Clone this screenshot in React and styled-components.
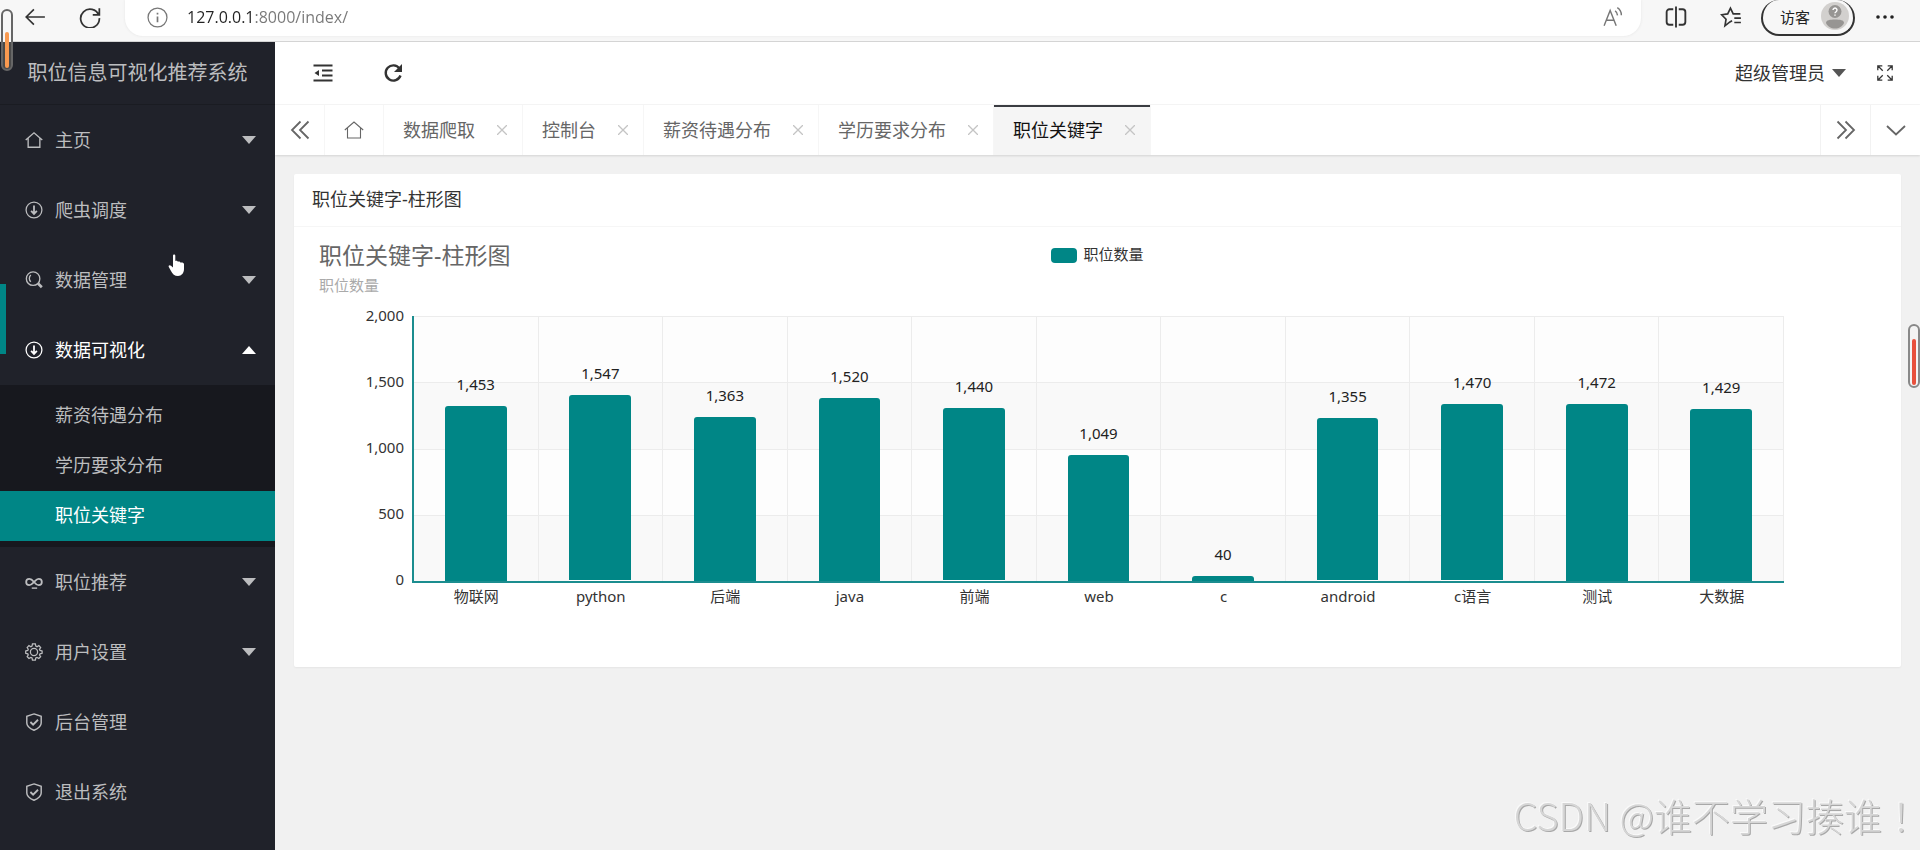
import React from 'react';
import styled, { createGlobalStyle } from 'styled-components';

const TEAL = '#008686';
const BAR_MAX = 2200;

const GlobalStyle = createGlobalStyle`
  * {
    box-sizing: border-box;
  }

  body {
    margin: 0;
    background: #f1f1f1;
    color: #333;
    font-family: 'Noto Sans', 'Noto Sans CJK SC', sans-serif;
    font-size: 18px;
  }

  button,
  input {
    padding: 0;
    border: 0;
    background: none;
    color: inherit;
    font: inherit;
  }

  a {
    color: inherit;
    text-decoration: none;
  }

  svg {
    display: block;
    flex: none;
  }
`;

const Page = styled.div`
  display: flex;
  flex-direction: column;
  min-height: 100vh;
`;

/* browser bar */

const BrowserBar = styled.header`
  display: flex;
  align-items: flex-start;
  height: 42px;
  padding: 0 24px;
  background: #f7f7f7;
  border-bottom: 1px solid #d4d4d4;
`;

const BrowserButton = styled.button`
  display: flex;
  align-items: center;
  justify-content: center;
  width: 22px;
  height: 34px;
  margin-right: ${(props) => props.$gap || 0}px;
  color: #333;
`;

const AddressBar = styled.label`
  display: flex;
  flex: 1;
  align-items: center;
  gap: 19px;
  height: 36px;
  margin-right: 24px;
  padding: 0 16px 2px 22px;
  background: #fff;
  border-radius: 0 0 18px 18px;
  box-shadow: 0 0 3px #e4e4e4;
  color: #777;
`;

const AddressInput = styled.input`
  flex: 1;
  height: 26px;
  background: linear-gradient(to right, #222 67px, #777 67px);
  background-clip: text;
  color: transparent;
  font-family: 'Open Sans', sans-serif;
  font-size: 16px;
`;

const GuestButton = styled.button`
  display: flex;
  align-items: center;
  gap: 11px;
  height: 36px;
  margin-right: 19px;
  padding: 0 4px 2px 17px;
  border: 2px solid #333;
  border-top: 0;
  border-radius: 18px;
  color: #222;
  font-size: 15px;
`;

/* sidebar */

const Body = styled.div`
  display: flex;
  flex: 1;
`;

const Sidebar = styled.nav`
  position: relative;
  flex: none;
  width: 275px;
  background: #20222a;
  color: #bcbdbf;
`;

const Logo = styled.h1`
  margin: 0;
  height: 63px;
  line-height: 62px;
  border-bottom: 1px solid #1a1c22;
  font-size: 20px;
  font-weight: 400;
  text-align: center;
`;

const MenuItem = styled.button`
  display: flex;
  align-items: center;
  gap: 12px;
  width: 100%;
  height: 70px;
  padding: 0 19px 0 25px;
  color: ${(props) => (props.$open ? '#fff' : '#bcbdbf')};
  text-align: left;
`;

const MenuText = styled.span`
  flex: 1;
  padding-bottom: 2px;
`;

const SubMenu = styled.div`
  padding: 6px 0;
  background: #17181e;
`;

const SubItem = styled.a`
  display: block;
  height: 50px;
  padding-left: 55px;
  background: ${(props) => (props.$active ? TEAL : 'none')};
  color: ${(props) => (props.$active ? '#fff' : '#bcbdbf')};
  line-height: 48px;
`;

const NavMarker = styled.span`
  position: absolute;
  top: 242px;
  left: 0;
  width: 6px;
  height: 70px;
  background: ${TEAL};
`;

/* top bar and tabs */

const Main = styled.main`
  flex: 1;
  min-width: 0;
`;

const TopBar = styled.div`
  display: flex;
  align-items: center;
  gap: 50px;
  height: 63px;
  padding: 0 26px 0 38px;
  background: #fff;
  border-bottom: 1px solid #f6f6f6;
`;

const IconButton = styled.button`
  display: flex;
  color: #333;
`;

const UserGroup = styled.div`
  display: flex;
  align-items: center;
  gap: 30px;
  margin-left: auto;
  color: #555;
`;

const UserButton = styled.button`
  display: flex;
  align-items: center;
  gap: 7px;
`;

const UserName = styled.span`
  padding-bottom: 2px;
  color: #333;
`;

const TabBar = styled.div`
  display: flex;
  height: 50px;
  background: #fff;
  box-shadow: 0 1px 2px rgba(0, 0, 0, 0.12);
`;

const TabControl = styled.button`
  display: flex;
  align-items: center;
  justify-content: center;
  width: ${(props) => props.$width || 50}px;
  border-right: ${(props) => (props.$side === 'right' ? 0 : '1px solid #f6f6f6')};
  border-left: ${(props) => (props.$side === 'right' ? '1px solid #f2f2f2' : 0)};
  color: #666;
`;

const Tab = styled.div`
  display: flex;
  align-items: center;
  gap: 22px;
  padding: 0 15px 0 19px;
  border-right: 1px solid #f6f6f6;
  background: ${(props) => (props.$active ? '#f5f5f5' : '#fff')};
  box-shadow: ${(props) => (props.$active ? 'inset 0 2px #3a3c42' : 'none')};
  color: ${(props) => (props.$active ? '#111' : '#666')};
`;

const TabLink = styled.a`
  padding-bottom: 2px;
`;

const CloseButton = styled.button`
  color: #c4c4c4;
`;

const Spacer = styled.div`
  flex: 1;
`;

/* chart card */

const Card = styled.section`
  margin: 19px;
  background: #fff;
  border-radius: 2px;
  box-shadow: 0 1px 2px rgba(0, 0, 0, 0.05);
`;

const CardHeader = styled.h2`
  margin: 0;
  height: 53px;
  padding-left: 18px;
  border-bottom: 1px solid #f6f6f6;
  font-size: 18px;
  font-weight: 400;
  line-height: 50px;
`;

const CardBody = styled.div`
  padding: 14px 0 61px;
`;

const ChartHead = styled.div`
  display: grid;
  grid-template-columns: 1fr auto 1fr;
  padding: 0 25px;
`;

const ChartTitle = styled.h3`
  margin: 0;
  color: #666;
  font-size: 23px;
  font-weight: 400;
  line-height: 28px;
`;

const ChartSubtitle = styled.p`
  margin: 6px 0 21px;
  color: #aaa;
  font-size: 15px;
  line-height: 20px;
`;

const Legend = styled.div`
  display: flex;
  align-items: center;
  gap: 6px;
  height: 28px;
  font-size: 15px;
`;

const LegendText = styled.span`
  padding-bottom: 3px;
`;

const Swatch = styled.span`
  width: 26px;
  height: 15px;
  border-radius: 4px;
  background: ${TEAL};
`;

const ChartArea = styled.div`
  display: grid;
  grid-template-columns: 118px 1fr 117px;
  font-size: 15px;
  line-height: 20px;
`;

const YAxis = styled.div`
  display: flex;
  flex-direction: column;
  justify-content: space-between;
  margin: -11px 0 -6px;
  padding-right: 8px;
  text-align: right;
`;

const Plot = styled.div`
  display: flex;
  height: 267px;
  border-bottom: 2px solid #1b8d8f;
  border-left: 2px solid #1b8d8f;
  background: repeating-linear-gradient(
    #ececec 0 1px,
    #fdfdfd 1px 66px,
    #ececec 66px 67px,
    #f9f9f9 67px 133px
  );
`;

const Column = styled.div`
  display: flex;
  flex: 1;
  flex-direction: column;
  align-items: center;
  justify-content: flex-end;
  border-right: 1px solid #ececec;
`;

const BarValue = styled.span`
  margin-bottom: 12px;
  color: #222;
`;

const Bar = styled.div`
  flex: none;
  width: 50%;
  background: ${TEAL};
  border-bottom: ${(props) => (props.$lifted ? '1px solid #fff' : 0)};
  border-radius: 3px 3px 0 0;
`;

const XAxis = styled.div`
  display: flex;
  grid-column: 2;
  padding: 3px 0 0 2px;
`;

const XLabel = styled.span`
  flex: 1;
  text-align: center;
`;

/* things floating over the page */

const Gauge = styled.span`
  position: fixed;
  top: ${(props) => props.$top}px;
  left: ${(props) => props.$left || 'auto'};
  right: ${(props) => props.$right || 'auto'};
  display: flex;
  align-items: flex-end;
  justify-content: center;
  width: 12px;
  height: ${(props) => props.$height}px;
  padding-bottom: 1px;
  border: 2px solid ${(props) => props.$edge};
  border-radius: 6px;
  background: ${(props) => props.$back};
`;

const GaugeFill = styled.span`
  width: 4px;
  height: ${(props) => props.$height}px;
  border-radius: 2px;
  background: ${(props) => props.$color};
`;

const Pointer = styled.svg`
  position: fixed;
  top: 254px;
  left: 168px;
`;

const Watermark = styled.div`
  position: fixed;
  right: 0;
  bottom: 8px;
  color: #d6d6d6;
  font-family: 'Noto Sans CJK TC', sans-serif;
  font-size: 38px;
  font-weight: 300;
  line-height: 54px;
  text-shadow: 1px 1px 0 #a8a8a8, -1px -1px 0 #fafafa;
`;

const Icon = ({ size = 18, width = 1.5, children }) => (
  <svg
    width={size}
    height={size}
    viewBox="0 0 20 20"
    fill="none"
    stroke="currentColor"
    strokeWidth={width}
    aria-hidden="true"
  >
    {children}
  </svg>
);

const HomeIcon = ({ size, width }) => (
  <Icon size={size} width={width}>
    <path d="M.8 10 10 2l9.2 8M3.5 8v10h13V8" />
  </Icon>
);

const DownIcon = () => (
  <Icon width={1.4}>
    <circle cx="10" cy="10" r="8.8" />
    <path d="M10 5v9M6.800 11l3.200 3.400 3.200-3.400" strokeWidth="2" />
  </Icon>
);

const SearchIcon = () => (
  <Icon width={1.5}>
    <circle cx="9" cy="8.5" r="7.5" />
    <path d="M6.500 12a5 5 0 0 1 0-7.500" />
    <path d="m14.500 14 4.200 4" strokeWidth="3" />
  </Icon>
);

const InfinityIcon = () => (
  <Icon width={2}>
    <path d="M10 10C8 7.500 6.700 6.500 4.800 6.500a3.500 3.500 0 0 0 0 7C7 13.500 8.500 11.500 10 10s3-3.500 5.200-3.500a3.500 3.500 0 0 1 0 7C13.300 13.500 12 12.500 10 10Z" />
    <path d="M7.500 16.800h6" strokeWidth="1.600" />
  </Icon>
);

const GearIcon = () => (
  <Icon width={1.4}>
    <circle cx="10" cy="10" r="4" />
    <path d="m8.300 1-.5 2.500-1.300.6-2.100-1.200-2 2.100 1.200 2-.5 1.300-2.300.5v2.600l2.300.6.5 1.300-1.200 2 2 2 2.100-1.200 1.300.6.5 2.300h3.200l.5-2.300 1.300-.6 2.100 1.200 2-2-1.300-2 .6-1.300 2.300-.6V8.800l-2.300-.5-.6-1.300 1.300-2-2-2.100-2.100 1.200-1.300-.6-.5-2.500Z" />
  </Icon>
);

const ShieldIcon = () => (
  <Icon width={1.6}>
    <path d="m10 1 8 2.600V11c0 4-4 6.500-8 8.200C6 17.500 2 15 2 11V3.600Z" />
    <path d="m6 10 3 3 5.500-5.500" strokeWidth="2" />
  </Icon>
);

const Caret = ({ up }) => (
  <svg width="14" height="8" viewBox="0 0 14 8" fill="currentColor" aria-hidden="true">
    <path d={up ? 'M0 8 7 0l7 8Z' : 'M0 0h14L7 8Z'} />
  </svg>
);

const menu = [
  { text: '主页', icon: <HomeIcon />, expandable: true },
  { text: '爬虫调度', icon: <DownIcon />, expandable: true },
  { text: '数据管理', icon: <SearchIcon />, expandable: true },
  {
    text: '数据可视化',
    icon: <DownIcon />,
    expandable: true,
    children: ['薪资待遇分布', '学历要求分布', '职位关键字'],
  },
  { text: '职位推荐', icon: <InfinityIcon />, expandable: true },
  { text: '用户设置', icon: <GearIcon />, expandable: true },
  { text: '后台管理', icon: <ShieldIcon /> },
  { text: '退出系统', icon: <ShieldIcon /> },
];

const tabs = ['数据爬取', '控制台', '薪资待遇分布', '学历要求分布', '职位关键字'];

const current = '职位关键字';

const data = [
  { name: '物联网', value: 1453 },
  { name: 'python', value: 1547, lifted: true },
  { name: '后端', value: 1363 },
  { name: 'java', value: 1520 },
  { name: '前端', value: 1440, lifted: true },
  { name: 'web', value: 1049 },
  { name: 'c', value: 40 },
  { name: 'android', value: 1355, lifted: true },
  { name: 'c语言', value: 1470, lifted: true },
  { name: '测试', value: 1472 },
  { name: '大数据', value: 1429 },
];

const ticks = [2000, 1500, 1000, 500, 0];

const format = (value) => value.toLocaleString('en-US');

const Browser = () => (
  <BrowserBar>
    <BrowserButton $gap={33} aria-label="返回">
      <Icon size={22} width={1.5}>
        <path d="M19 10H2M9 3 2 10l7 7" />
      </Icon>
    </BrowserButton>
    <BrowserButton $gap={24} aria-label="刷新">
      <Icon size={22} width={1.6}>
        <path d="M18 8.500A8.500 8.500 0 1 0 18.500 11M18.500 2v6h-6" />
      </Icon>
    </BrowserButton>
    <AddressBar>
      <Icon size={21} width={1.2}>
        <circle cx="10" cy="10" r="9" />
        <path d="M10 9v5.500M10 5.500v1.600" strokeWidth="1.600" />
      </Icon>
      <AddressInput aria-label="地址" defaultValue="127.0.0.1:8000/index/" />
      <Icon size={22} width={1.3}>
        <path d="m1 18 5.500-14L12 18M3 13h7M11 4.500c1.500 1 2 2 2.200 4M13 1.500c2.500 1.500 3.700 4 3.700 7" />
      </Icon>
    </AddressBar>
    <BrowserButton $gap={33} aria-label="分屏">
      <Icon size={22} width={1.7}>
        <path d="M7.500 3H4a2.500 2.500 0 0 0-2.500 2.500v9A2.500 2.500 0 0 0 4 17h3.500M12.500 3H16a2.500 2.500 0 0 1 2.500 2.500v9A2.500 2.500 0 0 1 16 17h-3.500M10 .5v19" />
      </Icon>
    </BrowserButton>
    <BrowserButton $gap={19} aria-label="收藏夹">
      <Icon size={22} width={1.5}>
        <path d="M11 13.500 9 14.500 4.500 18l1-6L1.500 8l5.500-.8L9.500 2 12 7.200h6.500M13 11h6M13 15h6" />
      </Icon>
    </BrowserButton>
    <GuestButton>
      访客
      <svg width="28" height="28" viewBox="0 0 28 28" aria-hidden="true">
        <circle cx="14" cy="14" r="14" fill="#d2d0ce" />
        <circle cx="14" cy="9.500" r="6.500" fill="#979593" />
        <path d="M5 21c0-3 4-3.500 9-3.500s9 .5 9 3.500c-1.500 3.500-5 5.500-9 5.500S6.500 24.500 5 21Z" fill="#979593" />
        <path d="M12 8a2 2 0 1 1 3 1.800q-1 .5-1 1.500M14 12.500v1.300" fill="none" stroke="#fff" strokeWidth="1.400" />
      </svg>
    </GuestButton>
    <BrowserButton aria-label="更多">
      <svg width="18" height="4" fill="#222" aria-hidden="true">
        <circle cx="2" cy="2" r="1.800" />
        <circle cx="9" cy="2" r="1.800" />
        <circle cx="16" cy="2" r="1.800" />
      </svg>
    </BrowserButton>
  </BrowserBar>
);

const SideMenu = () => (
  <Sidebar>
    <Logo>职位信息可视化推荐系统</Logo>
    {menu.map((item) => (
      <React.Fragment key={item.text}>
        <MenuItem $open={Boolean(item.children)}>
          {item.icon}
          <MenuText>{item.text}</MenuText>
          {item.expandable && <Caret up={Boolean(item.children)} />}
        </MenuItem>
        {item.children && (
          <SubMenu>
            {item.children.map((child) => (
              <SubItem key={child} href="#" $active={child === current}>
                {child}
              </SubItem>
            ))}
          </SubMenu>
        )}
      </React.Fragment>
    ))}
    <NavMarker />
  </Sidebar>
);

const Tabs = () => (
  <TabBar>
    <TabControl aria-label="向左">
      <Icon size={20} width={1.8}>
        <path d="M10.500 1.500 2 10l8.500 8.500M18.500 1.500 10 10l8.500 8.500" />
      </Icon>
    </TabControl>
    <TabControl $width={59} aria-label="主页">
      <HomeIcon size={20} width={1.1} />
    </TabControl>
    {tabs.map((tab) => (
      <Tab key={tab} $active={tab === current}>
        <TabLink href="#">{tab}</TabLink>
        <CloseButton aria-label="关闭">
          <svg width="10" height="10" viewBox="0 0 10 10" stroke="currentColor" strokeWidth="1.300">
            <path d="m0 0 10 10M10 0 0 10" />
          </svg>
        </CloseButton>
      </Tab>
    ))}
    <Spacer />
    <TabControl $side="right" aria-label="向右">
      <Icon size={20} width={1.8}>
        <path d="M1.500 1.500 10 10l-8.500 8.500M9.500 1.500 18 10l-8.500 8.500" />
      </Icon>
    </TabControl>
    <TabControl $side="right" aria-label="展开">
      <Icon size={20} width={1.8}>
        <path d="m1 6 9 8.500L19 6" />
      </Icon>
    </TabControl>
  </TabBar>
);

const Chart = () => (
  <CardBody>
    <ChartHead>
      <div>
        <ChartTitle>职位关键字-柱形图</ChartTitle>
        <ChartSubtitle>职位数量</ChartSubtitle>
      </div>
      <Legend>
        <Swatch />
        <LegendText>职位数量</LegendText>
      </Legend>
    </ChartHead>
    <ChartArea>
      <YAxis>
        {ticks.map((tick) => (
          <span key={tick}>{format(tick)}</span>
        ))}
      </YAxis>
      <Plot>
        {data.map(({ name, value, lifted }) => (
          <Column key={name}>
            <BarValue>{format(value)}</BarValue>
            <Bar $lifted={lifted} style={{ height: `${(value / BAR_MAX) * 100}%` }} />
          </Column>
        ))}
      </Plot>
      <XAxis>
        {data.map(({ name }) => (
          <XLabel key={name}>{name}</XLabel>
        ))}
      </XAxis>
    </ChartArea>
  </CardBody>
);

const App = () => (
  <Page>
    <GlobalStyle />
    <Browser />
    <Body>
      <SideMenu />
      <Main>
        <TopBar>
          <IconButton aria-label="收起菜单">
            <Icon size={20} width={2}>
              <path d="M.5 2.500h19M9 7.500h10.500M9 12.500h10.500M.5 17.500h19" />
              <path d="M6 7v6l-4.500-3Z" fill="currentColor" stroke="none" />
            </Icon>
          </IconButton>
          <IconButton aria-label="刷新页面">
            <Icon size={20} width={2.4}>
              <path d="M16.500 5.500A7.600 7.600 0 1 0 17.500 12.500" />
              <path d="M19 1v8h-8Z" fill="currentColor" stroke="none" />
            </Icon>
          </IconButton>
          <UserGroup>
            <UserButton>
              <UserName>超级管理员</UserName>
              <Caret />
            </UserButton>
            <IconButton aria-label="全屏">
              <Icon size={18} width={1.4}>
                <path d="M2 7V2h5M2 2l5.500 5.500M13 2h5v5M18 2l-5.500 5.500M2 13v5h5M2 18l5.500-5.500M18 13v5h-5M18 18l-5.500-5.500" />
              </Icon>
            </IconButton>
          </UserGroup>
        </TopBar>
        <Tabs />
        <Card>
          <CardHeader>职位关键字-柱形图</CardHeader>
          <Chart />
        </Card>
      </Main>
    </Body>
    <Gauge
      $top={9}
      $left="1px"
      $height={62}
      $edge="#666"
      $back="linear-gradient(#f7f7f7 31px, #4a4a4a 31px)"
    >
      <GaugeFill $height={36} $color="#fa9a50" />
    </Gauge>
    <Gauge $top={324} $right="0px" $height={64} $edge="#888" $back="#f4f4f4">
      <GaugeFill $height={46} $color="#e8503c" />
    </Gauge>
    <Pointer width="18" height="23" viewBox="0 0 18 23" fill="#fff" aria-hidden="true">
      <path d="M5 1.500c0-1.500 2.300-1.500 2.300 0V7c1-.6 2.400-.2 2.600.8.900-.6 2.300-.2 2.500.8 1.500-.5 3.600 0 3.600 1.400V15c0 4-2.500 7-6 7-3.500 0-5.500-2-7-5L.800 13c-.8-1.500.9-2.500 2.200-1.300L5 13.500Z" />
    </Pointer>
    <Watermark>CSDN @谁不学习揍谁！</Watermark>
  </Page>
);

export default App;
